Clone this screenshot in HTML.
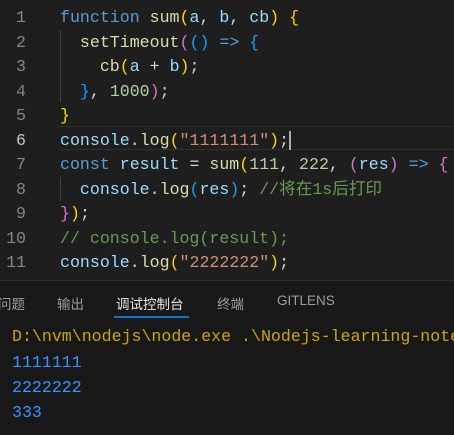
<html><head><style>
body{margin:0;width:454px;height:434px;background:#1e1e1e;overflow:hidden;position:relative;font-family:"Liberation Mono",monospace}
.ed{position:absolute;top:0;left:0;width:454px;height:280px;background:#1e1e1e}
.l{position:absolute;left:0;height:24px;line-height:24px;font-size:16.6px;white-space:pre;width:454px}
.n{position:absolute;right:428px;color:#858585;text-align:right}
.c{position:absolute;left:60px;color:#d4d4d4}
.k{color:#569cd6}.f{color:#dcdcaa}.v{color:#9cdcfe}.s{color:#ce9178}.m{color:#b5cea8}.g{color:#6a9955}
.y{color:#ffd700}.p{color:#da70d6}.b{color:#179fff}
.panel{position:absolute;top:280px;left:0;width:454px;height:154px;background:#181818;border-top:1px solid #2b2b2b}
.tab{position:absolute;top:12px;font-family:"Liberation Sans","Noto Sans CJK SC",sans-serif;font-size:13.5px;color:#9d9d9d}
.o{position:absolute;left:12px;font-size:16.6px;white-space:pre;line-height:24px}
</style></head><body>
<div class="ed">
<div style="position:absolute;left:60px;top:126px;width:394px;height:22px;border-top:1px solid #2f2f2f;border-bottom:1px solid #2f2f2f"></div>
<div style="position:absolute;left:60px;top:30px;width:1px;height:72px;background:#404040"></div>
<div style="position:absolute;left:60px;top:177px;width:1px;height:24px;background:#404040"></div>
<div class="l" style="top:6px"><span class="n">1</span><span class="c"><span class="k">function</span> <span class="f">sum</span><span class="y">(</span><span class="v">a</span>, <span class="v">b</span>, <span class="v">cb</span><span class="y">)</span> <span class="y">{</span></span></div>
<div class="l" style="top:30.5px"><span class="n">2</span><span class="c">  <span class="f">setTimeout</span><span class="p">(</span><span class="b">()</span> <span class="k">=&gt;</span> <span class="b">{</span></span></div>
<div class="l" style="top:55px"><span class="n">3</span><span class="c">    <span class="f">cb</span><span class="y">(</span><span class="v">a</span> + <span class="v">b</span><span class="y">)</span>;</span></div>
<div class="l" style="top:79.5px"><span class="n">4</span><span class="c">  <span class="b">}</span>, <span class="m">1000</span><span class="p">)</span>;</span></div>
<div class="l" style="top:104px"><span class="n">5</span><span class="c"><span class="y">}</span></span></div>
<div class="l" style="top:128.5px"><span class="n" style="color:#c6c6c6">6</span><span class="c"><span class="v">console</span>.<span class="f">log</span><span class="y">(</span><span class="s">"1111111"</span><span class="y">)</span>;<span style="border-left:2px solid #aeafad"></span></span></div>
<div class="l" style="top:153px"><span class="n">7</span><span class="c"><span class="k">const</span> <span class="v">result</span> = <span class="f">sum</span><span class="y">(</span><span class="m">111</span>, <span class="m">222</span>, <span class="p">(</span><span class="v">res</span><span class="p">)</span> <span class="k">=&gt;</span> <span class="p">{</span></span></div>
<div class="l" style="top:177.5px"><span class="n">8</span><span class="c">  <span class="v">console</span>.<span class="f">log</span><span class="b">(</span><span class="v">res</span><span class="b">)</span>; <span class="g">//将在1s后打印</span></span></div>
<div class="l" style="top:202px"><span class="n">9</span><span class="c"><span class="p">}</span><span class="y">)</span>;</span></div>
<div class="l" style="top:226.5px"><span class="n">10</span><span class="c"><span class="g">// console.log(result);</span></span></div>
<div class="l" style="top:251px"><span class="n">11</span><span class="c"><span class="v">console</span>.<span class="f">log</span><span class="y">(</span><span class="s">"2222222"</span><span class="y">)</span>;</span></div>
</div>
<div class="panel">
<span class="tab" style="left:-2px">问题</span>
<span class="tab" style="left:57px">输出</span>
<span class="tab" style="left:116px;color:#e7e7e7">调试控制台</span>
<span class="tab" style="left:217px">终端</span>
<span class="tab" style="left:277px">GITLENS</span>
<div style="position:absolute;left:114px;top:35px;width:75px;height:2px;background:#0078d4"></div>
<div class="o" style="top:44px;color:#cca700">D:\nvm\nodejs\node.exe .\Nodejs-learning-notes</div>
<div class="o" style="top:70px;color:#3794ff">1111111</div>
<div class="o" style="top:95px;color:#3794ff">2222222</div>
<div class="o" style="top:120px;color:#3794ff">333</div>
</div>
</body></html>
